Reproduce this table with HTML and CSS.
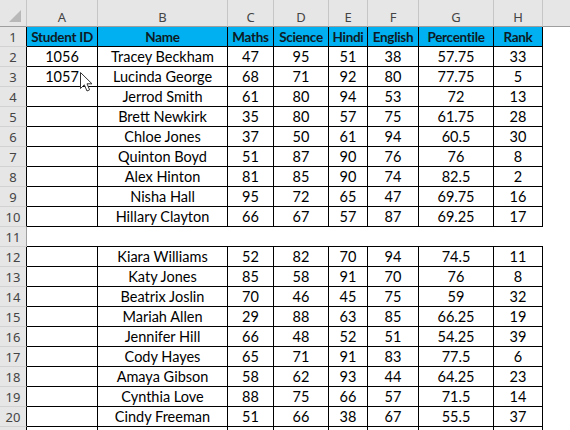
FILE: index.html
```html
<!DOCTYPE html>
<html>
<head>
<meta charset="utf-8">
<link rel="stylesheet" href="styles.css">
</head>
<body>
<div class="sheet">
  <div class="row colhead">
    <div class="corner"><span class="tri"></span></div>
    <div class="ch">A</div><div class="ch">B</div><div class="ch">C</div><div class="ch">D</div><div class="ch">E</div><div class="ch">F</div><div class="ch">G</div><div class="ch">H</div><div class="ch rest"></div>
  </div>
  <div class="row head data">
    <div class="rh">1</div>
    <div class="c">Student ID</div><div class="c">Name</div><div class="c">Maths</div><div class="c">Science</div><div class="c">Hindi</div><div class="c">English</div><div class="c">Percentile</div><div class="c">Rank</div><div class="e"></div>
  </div>
  <div class="row data"><div class="rh">2</div><div class="c">1056</div><div class="c">Tracey Beckham</div><div class="c">47</div><div class="c">95</div><div class="c">51</div><div class="c">38</div><div class="c">57.75</div><div class="c">33</div><div class="e"></div></div>
  <div class="row data"><div class="rh">3</div><div class="c">1057</div><div class="c">Lucinda George</div><div class="c">68</div><div class="c">71</div><div class="c">92</div><div class="c">80</div><div class="c">77.75</div><div class="c">5</div><div class="e"></div></div>
  <div class="row data"><div class="rh">4</div><div class="c"></div><div class="c">Jerrod Smith</div><div class="c">61</div><div class="c">80</div><div class="c">94</div><div class="c">53</div><div class="c">72</div><div class="c">13</div><div class="e"></div></div>
  <div class="row data"><div class="rh">5</div><div class="c"></div><div class="c">Brett Newkirk</div><div class="c">35</div><div class="c">80</div><div class="c">57</div><div class="c">75</div><div class="c">61.75</div><div class="c">28</div><div class="e"></div></div>
  <div class="row data"><div class="rh">6</div><div class="c"></div><div class="c">Chloe Jones</div><div class="c">37</div><div class="c">50</div><div class="c">61</div><div class="c">94</div><div class="c">60.5</div><div class="c">30</div><div class="e"></div></div>
  <div class="row data"><div class="rh">7</div><div class="c"></div><div class="c">Quinton Boyd</div><div class="c">51</div><div class="c">87</div><div class="c">90</div><div class="c">76</div><div class="c">76</div><div class="c">8</div><div class="e"></div></div>
  <div class="row data"><div class="rh">8</div><div class="c"></div><div class="c">Alex Hinton</div><div class="c">81</div><div class="c">85</div><div class="c">90</div><div class="c">74</div><div class="c">82.5</div><div class="c">2</div><div class="e"></div></div>
  <div class="row data"><div class="rh">9</div><div class="c"></div><div class="c">Nisha Hall</div><div class="c">95</div><div class="c">72</div><div class="c">65</div><div class="c">47</div><div class="c">69.75</div><div class="c">16</div><div class="e"></div></div>
  <div class="row data"><div class="rh">10</div><div class="c"></div><div class="c">Hillary Clayton</div><div class="c">66</div><div class="c">67</div><div class="c">57</div><div class="c">87</div><div class="c">69.25</div><div class="c">17</div><div class="e"></div></div>
  <div class="row blank"><div class="rh">11</div><div class="b"></div><div class="b"></div><div class="b"></div><div class="b"></div><div class="b"></div><div class="b"></div><div class="b"></div><div class="b"></div><div class="e"></div></div>
  <div class="row data"><div class="rh">12</div><div class="c"></div><div class="c">Kiara Williams</div><div class="c">52</div><div class="c">82</div><div class="c">70</div><div class="c">94</div><div class="c">74.5</div><div class="c">11</div><div class="e"></div></div>
  <div class="row data"><div class="rh">13</div><div class="c"></div><div class="c">Katy Jones</div><div class="c">85</div><div class="c">58</div><div class="c">91</div><div class="c">70</div><div class="c">76</div><div class="c">8</div><div class="e"></div></div>
  <div class="row data"><div class="rh">14</div><div class="c"></div><div class="c">Beatrix Joslin</div><div class="c">70</div><div class="c">46</div><div class="c">45</div><div class="c">75</div><div class="c">59</div><div class="c">32</div><div class="e"></div></div>
  <div class="row data"><div class="rh">15</div><div class="c"></div><div class="c">Mariah Allen</div><div class="c">29</div><div class="c">88</div><div class="c">63</div><div class="c">85</div><div class="c">66.25</div><div class="c">19</div><div class="e"></div></div>
  <div class="row data"><div class="rh">16</div><div class="c"></div><div class="c">Jennifer Hill</div><div class="c">66</div><div class="c">48</div><div class="c">52</div><div class="c">51</div><div class="c">54.25</div><div class="c">39</div><div class="e"></div></div>
  <div class="row data"><div class="rh">17</div><div class="c"></div><div class="c">Cody Hayes</div><div class="c">65</div><div class="c">71</div><div class="c">91</div><div class="c">83</div><div class="c">77.5</div><div class="c">6</div><div class="e"></div></div>
  <div class="row data"><div class="rh">18</div><div class="c"></div><div class="c">Amaya Gibson</div><div class="c">58</div><div class="c">62</div><div class="c">93</div><div class="c">44</div><div class="c">64.25</div><div class="c">23</div><div class="e"></div></div>
  <div class="row data"><div class="rh">19</div><div class="c"></div><div class="c">Cynthia Love</div><div class="c">88</div><div class="c">75</div><div class="c">66</div><div class="c">57</div><div class="c">71.5</div><div class="c">14</div><div class="e"></div></div>
  <div class="row data"><div class="rh">20</div><div class="c"></div><div class="c">Cindy Freeman</div><div class="c">51</div><div class="c">66</div><div class="c">38</div><div class="c">67</div><div class="c">55.5</div><div class="c">37</div><div class="e"></div></div>
  <div class="row data"><div class="rh"></div><div class="c"></div><div class="c"></div><div class="c"></div><div class="c"></div><div class="c"></div><div class="c"></div><div class="c"></div><div class="c"></div><div class="e"></div></div>
</div>
<svg class="cursor" width="14" height="22" viewBox="0 0 14 22">
  <path d="M0.5 0.5 L0.5 16.5 L4.3 12.8 L7 19 L9.6 17.8 L7 11.8 L12 11.8 Z" fill="#fff" stroke="#333" stroke-width="1" stroke-linejoin="round"/>
</svg>
</body>
</html>
```
FILE: styles.css
```css
html, body {
  margin: 0;
  padding: 0;
  background: #fff;
  overflow: hidden;
}
body {
  width: 570px;
  height: 430px;
  position: relative;
}
.sheet {
  display: flex;
  flex-direction: column;
}
.row {
  display: grid;
  grid-template-columns: 27px 71px 130px 46px 55px 39px 51px 75px 49px 1fr;
  height: 20px;
}
.row > div {
  box-sizing: border-box;
  display: flex;
  align-items: center;
  justify-content: center;
}
.colhead {
  height: 27px;
  background: #e6e6e6;
}
.colhead > div {
  border-right: 1px solid #c6c6c6;
  border-bottom: 1px solid #9e9e9e;
  font-family: "Noto Sans", sans-serif;
  font-size: 13px;
  color: #444;
  padding-top: 7px;
}
.colhead .rest {
  border-right: none;
}
.corner {
  position: relative;
}
.tri {
  position: absolute;
  right: 5px;
  bottom: 4px;
  width: 0;
  height: 0;
  border-left: 12px solid transparent;
  border-bottom: 12px solid #b8b8b8;
}
.rh {
  background: #e6e6e6;
  border-right: 1px solid #9e9e9e;
  border-bottom: 1px solid #d2d2d2;
  font-family: "Noto Sans", sans-serif;
  font-size: 13px;
  color: #444;
}
.data .rh {
  border-right-color: #000;
}
.c {
  border-right: 1px solid #000;
  border-bottom: 1px solid #000;
  font-family: "Lato", sans-serif;
  font-size: 14.5px;
  color: #000;
  white-space: nowrap;
}
.head .c {
  background: #00b0f0;
  font-weight: bold;
  font-size: 13.5px;
  letter-spacing: -0.3px;
  color: #0d1a24;
}
.blank .b {
  border-bottom: 1px solid #000;
}
.cursor {
  position: absolute;
  left: 80px;
  top: 72px;
}
```
